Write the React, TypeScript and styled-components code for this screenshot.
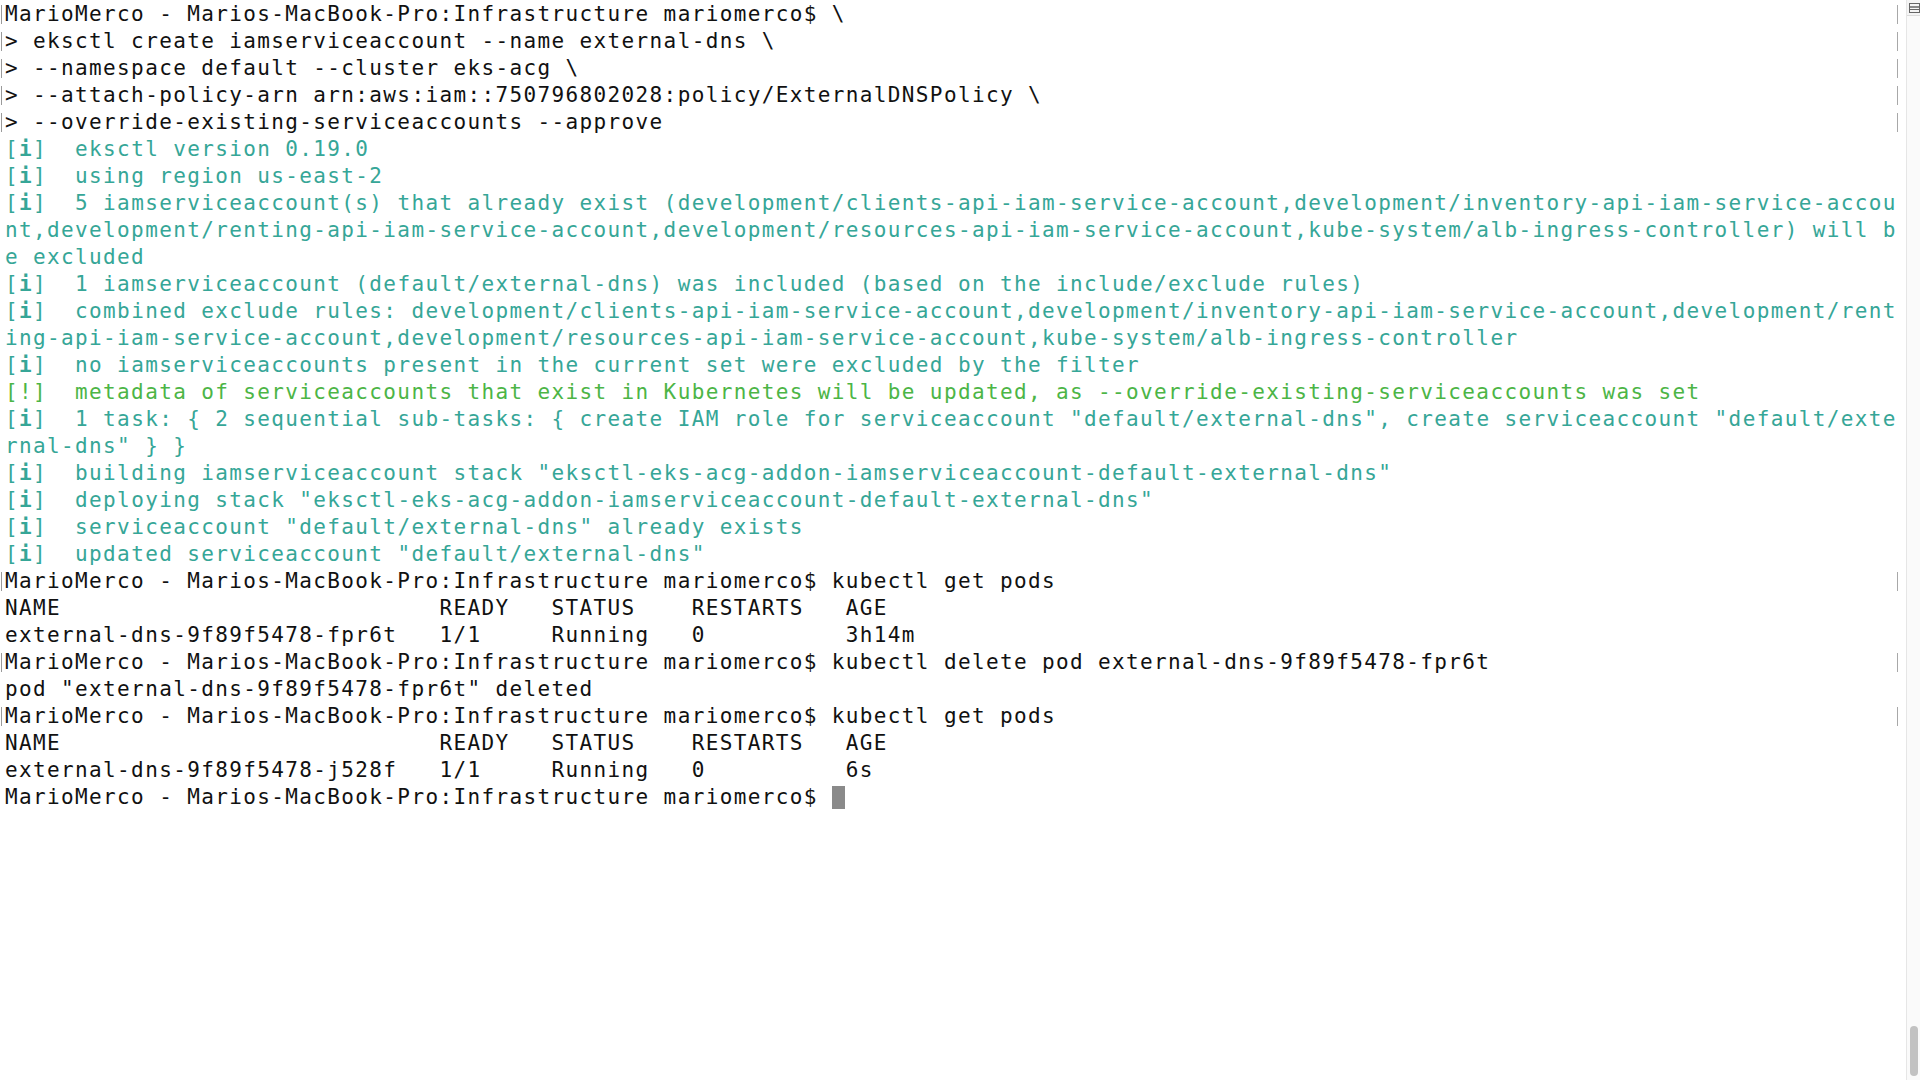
import React from "react";
import styled, { createGlobalStyle } from "styled-components";

const Global = createGlobalStyle`
  html, body { margin: 0; padding: 0; background: #ffffff; }
  body { overflow: hidden; }
`;

const Screen = styled.div`
  display: flex;
  width: 1920px;
  height: 1080px;
  background: #ffffff;
  overflow: hidden;
`;

const Terminal = styled.div`
  flex: 1;
  display: flex;
  flex-direction: column;
  padding-top: 1px;
  font-family: "DejaVu Sans Mono", "Liberation Mono", monospace;
  font-size: 21px;
  letter-spacing: 1.37px;
  line-height: 27px;
  color: #111111;
`;

const Row = styled.div<{ $tone?: "info" | "warn" | "plain" }>`
  display: flex;
  height: 27px;
  white-space: pre;
  color: ${(p) =>
    p.$tone === "info" ? "#36a697" : p.$tone === "warn" ? "#4cb546" : "#111111"};
`;

const Mark = styled.span<{ $on?: boolean }>`
  flex: none;
  width: 5px;
  display: flex;
  align-items: center;
  &::before {
    content: "";
    display: ${(p) => (p.$on ? "block" : "none")};
    width: 1px;
    height: 19px;
    margin-left: 1px;
    background: #9a9a9a;
  }
`;

const Text = styled.span`
  flex: 1;
  overflow: visible;
`;

const RightMark = styled.span<{ $on?: boolean }>`
  flex: none;
  width: 9px;
  display: flex;
  align-items: center;
  &::before {
    content: "";
    display: ${(p) => (p.$on ? "block" : "none")};
    width: 1px;
    height: 19px;
    background: #a8a8a8;
  }
`;

const InfoGlyph = styled.span`
  font-weight: bold;
`;

const Cursor = styled.span`
  display: inline-block;
  width: 13px;
  height: 23px;
  vertical-align: -5px;
  background: #8a8a8a;
`;

const Scrollbar = styled.div`
  flex: none;
  width: 15px;
  display: flex;
  flex-direction: column;
  border-left: 1px solid #e6e6e6;
  background: #fafafa;
`;

const SplitButton = styled.div`
  flex: none;
  height: 15px;
  display: flex;
  align-items: center;
  justify-content: center;
  border-bottom: 1px solid #dcdcdc;
  background: #f4f4f4;
`;

const Track = styled.div`
  flex: 1;
  display: flex;
  flex-direction: column;
  justify-content: flex-end;
  align-items: center;
  padding-bottom: 4px;
`;

const Thumb = styled.div`
  width: 8px;
  height: 50px;
  border-radius: 4px;
  background: #c2c2c2;
`;

type Tone = "info" | "warn" | "plain";
type Line = { t: React.ReactNode; tone?: Tone; l?: boolean; r?: boolean };

const PROMPT = "MarioMerco - Marios-MacBook-Pro:Infrastructure mariomerco$ ";

const I = (rest: string) => (
  <>
    [<InfoGlyph>i</InfoGlyph>]{"  "}
    {rest}
  </>
);

const lines: Line[] = [
  { t: PROMPT + "\\", l: true, r: true },
  { t: "> eksctl create iamserviceaccount --name external-dns \\", l: true, r: true },
  { t: "> --namespace default --cluster eks-acg \\", l: true, r: true },
  { t: "> --attach-policy-arn arn:aws:iam::750796802028:policy/ExternalDNSPolicy \\", l: true, r: true },
  { t: "> --override-existing-serviceaccounts --approve", l: true, r: true },
  { t: I("eksctl version 0.19.0"), tone: "info" },
  { t: I("using region us-east-2"), tone: "info" },
  {
    t: I(
      "5 iamserviceaccount(s) that already exist (development/clients-api-iam-service-account,development/inventory-api-iam-service-accou"
    ),
    tone: "info",
  },
  {
    t: "nt,development/renting-api-iam-service-account,development/resources-api-iam-service-account,kube-system/alb-ingress-controller) will b",
    tone: "info",
  },
  { t: "e excluded", tone: "info" },
  { t: I("1 iamserviceaccount (default/external-dns) was included (based on the include/exclude rules)"), tone: "info" },
  {
    t: I(
      "combined exclude rules: development/clients-api-iam-service-account,development/inventory-api-iam-service-account,development/rent"
    ),
    tone: "info",
  },
  {
    t: "ing-api-iam-service-account,development/resources-api-iam-service-account,kube-system/alb-ingress-controller",
    tone: "info",
  },
  { t: I("no iamserviceaccounts present in the current set were excluded by the filter"), tone: "info" },
  {
    t: "[!]  metadata of serviceaccounts that exist in Kubernetes will be updated, as --override-existing-serviceaccounts was set",
    tone: "warn",
  },
  {
    t: I(
      '1 task: { 2 sequential sub-tasks: { create IAM role for serviceaccount "default/external-dns", create serviceaccount "default/exte'
    ),
    tone: "info",
  },
  { t: 'rnal-dns" } }', tone: "info" },
  { t: I('building iamserviceaccount stack "eksctl-eks-acg-addon-iamserviceaccount-default-external-dns"'), tone: "info" },
  { t: I('deploying stack "eksctl-eks-acg-addon-iamserviceaccount-default-external-dns"'), tone: "info" },
  { t: I('serviceaccount "default/external-dns" already exists'), tone: "info" },
  { t: I('updated serviceaccount "default/external-dns"'), tone: "info" },
  { t: PROMPT + "kubectl get pods", l: true, r: true },
  { t: "NAME                           READY   STATUS    RESTARTS   AGE" },
  { t: "external-dns-9f89f5478-fpr6t   1/1     Running   0          3h14m" },
  { t: PROMPT + "kubectl delete pod external-dns-9f89f5478-fpr6t", l: true, r: true },
  { t: 'pod "external-dns-9f89f5478-fpr6t" deleted' },
  { t: PROMPT + "kubectl get pods", l: true, r: true },
  { t: "NAME                           READY   STATUS    RESTARTS   AGE" },
  { t: "external-dns-9f89f5478-j528f   1/1     Running   0          6s" },
  {
    t: (
      <>
        {PROMPT}
        <Cursor />
      </>
    ),
  },
];

export default function App() {
  return (
    <>
      <Global />
      <Screen>
        <Terminal>
          {lines.map((line, i) => (
            <Row key={i} $tone={line.tone ?? "plain"}>
              <Mark $on={line.l} />
              <Text>{line.t}</Text>
              <RightMark $on={line.r} />
            </Row>
          ))}
        </Terminal>
        <Scrollbar>
          <SplitButton>
            <svg width="11" height="10" viewBox="0 0 11 10">
              <rect x="0.5" y="0.5" width="10" height="9" fill="none" stroke="#666" strokeWidth="1" />
              <line x1="1" y1="4" x2="10" y2="4" stroke="#666" strokeWidth="1.5" />
              <line x1="1" y1="6.5" x2="10" y2="6.5" stroke="#666" strokeWidth="1" />
            </svg>
          </SplitButton>
          <Track>
            <Thumb />
          </Track>
        </Scrollbar>
      </Screen>
    </>
  );
}
